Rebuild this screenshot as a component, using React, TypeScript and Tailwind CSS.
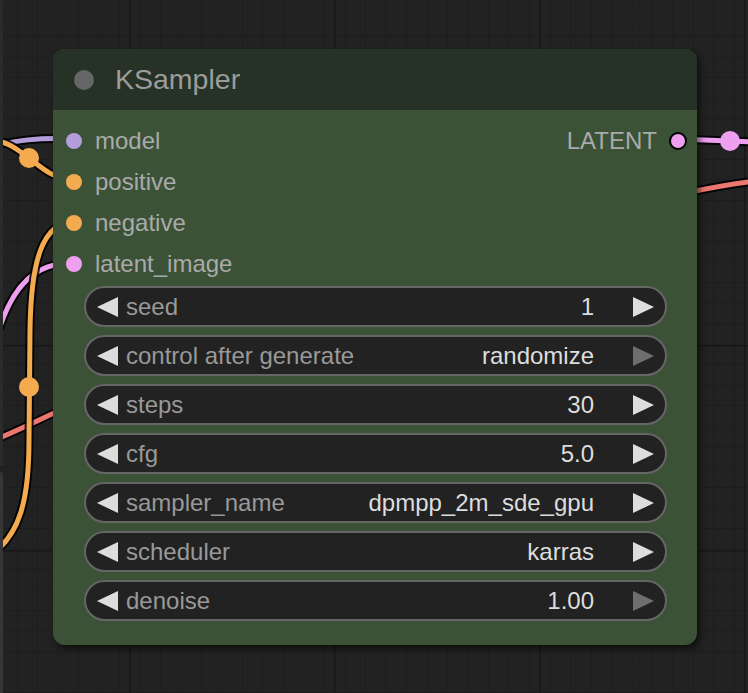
import React from 'react';

type Slot = { name: string; color: string };

const inputs: Slot[] = [
  { name: 'model', color: '#b39ddb' },
  { name: 'positive', color: '#f4ab4f' },
  { name: 'negative', color: '#f4ab4f' },
  { name: 'latent_image', color: '#ee9ff0' },
];

const widgets = [
  { label: 'seed', value: '1', nextOff: false },
  { label: 'control after generate', value: 'randomize', nextOff: true },
  { label: 'steps', value: '30', nextOff: false },
  { label: 'cfg', value: '5.0', nextOff: false },
  { label: 'sampler_name', value: 'dpmpp_2m_sde_gpu', nextOff: false },
  { label: 'scheduler', value: 'karras', nextOff: false },
  { label: 'denoise', value: '1.00', nextOff: true },
];

function Wire({ d, color }: { d: string; color: string }) {
  return (
    <g fill="none" strokeLinecap="round">
      <path d={d} stroke="#000" strokeOpacity={0.85} strokeWidth={9} />
      <path d={d} stroke={color} strokeWidth={5} />
    </g>
  );
}

function Canvas() {
  return (
    <svg className="absolute inset-0" width={748} height={693} viewBox="0 0 748 693">
      <defs>
        <pattern id="minor" x={-3} y={-4} width={20.5} height={20.5} patternUnits="userSpaceOnUse">
          <path d="M 20.5 0 L 20.5 20.5 M 0 20.5 L 20.5 20.5" stroke="#1b1b1b" strokeWidth={1.6} fill="none" />
        </pattern>
        <pattern id="major" x={129} y={140} width={205} height={205} patternUnits="userSpaceOnUse">
          <path d="M 0.5 0 L 0.5 205 M 0 0.5 L 205 0.5" stroke="#171717" strokeWidth={2.2} fill="none" />
        </pattern>
      </defs>
      <rect width={748} height={693} fill="#222222" />
      <rect width={748} height={693} fill="url(#minor)" />
      <rect width={748} height={693} fill="url(#major)" />

      {/* links going into the node */}
      <Wire d="M -8 441 C 20 430, 42 418, 74 404" color="#ec7670" />
      <Wire d="M 690 192 C 710 188, 730 184, 756 181" color="#ec7670" />
      <Wire d="M 74 263 C 40 262, 10 280, -6 348" color="#ee9ff0" />
      <Wire d="M 74 222 C 42 222, 31 262, 30 330 L 29 440 C 29 500, 20 535, -10 556" color="#f4ab4f" />
      <Wire d="M -8 146 C 15 141, 38 137, 74 139" color="#b39ddb" />
      <Wire d="M -8 139 C 8 142, 18 150, 29 158 C 42 168, 52 178, 74 181" color="#f4ab4f" />
      <Wire d="M 678 139 L 730 141 L 756 142" color="#ee9ff0" />

      {/* link midpoints */}
      <circle cx={29} cy={158} r={10} fill="#f4ab4f" />
      <circle cx={29} cy={387} r={10} fill="#f4ab4f" />
      <circle cx={730} cy={141} r={10} fill="#ee9ff0" />
    </svg>
  );
}

function Arrow({ dir, off }: { dir: 'left' | 'right'; off?: boolean }) {
  return (
    <svg width={21} height={20} viewBox="0 0 21 20" className="shrink-0">
      <polygon
        points={dir === 'left' ? '21,0 21,20 0,10' : '0,0 0,20 21,10'}
        fill={off ? '#6e6e6e' : '#dddddd'}
      />
    </svg>
  );
}

export default function App() {
  return (
    <div className="relative w-[748px] h-[693px] overflow-hidden bg-[#222222] font-['Liberation_Sans',Arial,sans-serif]">
      <Canvas />

      {/* neighbouring nodes, cut off at the left */}
      <div className="absolute left-0 top-0 w-[3px] h-[466px] bg-[#2b2b2b]" />
      <div className="absolute left-0 top-[472px] w-[3px] h-[221px] bg-[#363636] rounded-tr-sm" />

      {/* KSampler node */}
      <div className="absolute left-[53px] top-[49px] w-[644px] rounded-[12px] bg-[#3b5237] shadow-[3px_4px_6px_rgba(0,0,0,0.55)] flex flex-col">
        <div className="h-[61px] rounded-t-[12px] bg-[#273226] flex items-center pl-[21px] gap-[21px]">
          <div className="w-[20px] h-[20px] rounded-full bg-[#666666]" />
          <span className="text-[28.5px] leading-none text-[#9c9c9c]">KSampler</span>
        </div>

        <div className="pt-[10px] flex flex-col">
          {inputs.map((slot, i) => (
            <div key={slot.name} className="h-[41px] flex items-center justify-between pl-[13px] pr-[10px]">
              <div className="flex items-center gap-[13px]">
                <div className="w-[16px] h-[16px] rounded-full" style={{ backgroundColor: slot.color }} />
                <span className="text-[24px] leading-none text-[#aaaaaa]">{slot.name}</span>
              </div>
              {i === 0 && (
                <div className="flex items-center gap-[12px]">
                  <span className="text-[24px] leading-none text-[#aaaaaa]">LATENT</span>
                  <div className="w-[18px] h-[18px] rounded-full bg-[#ee9ff0] border-2 border-black" />
                </div>
              )}
            </div>
          ))}
        </div>

        <div className="mt-[2px] mx-[31px] mr-[30px] pb-[24px] flex flex-col gap-[8px]">
          {widgets.map((w) => (
            <div
              key={w.label}
              className="h-[41px] rounded-full bg-[#222222] border-2 border-[#666666] flex items-center pl-[11px] pr-[11px]"
            >
              <Arrow dir="left" />
              <span className="ml-[8px] text-[24px] leading-none text-[#999999] whitespace-nowrap">{w.label}</span>
              <span className="ml-auto mr-[39px] text-[24px] leading-none text-[#dddddd] whitespace-nowrap">{w.value}</span>
              <Arrow dir="right" off={w.nextOff} />
            </div>
          ))}
        </div>
      </div>
    </div>
  );
}
